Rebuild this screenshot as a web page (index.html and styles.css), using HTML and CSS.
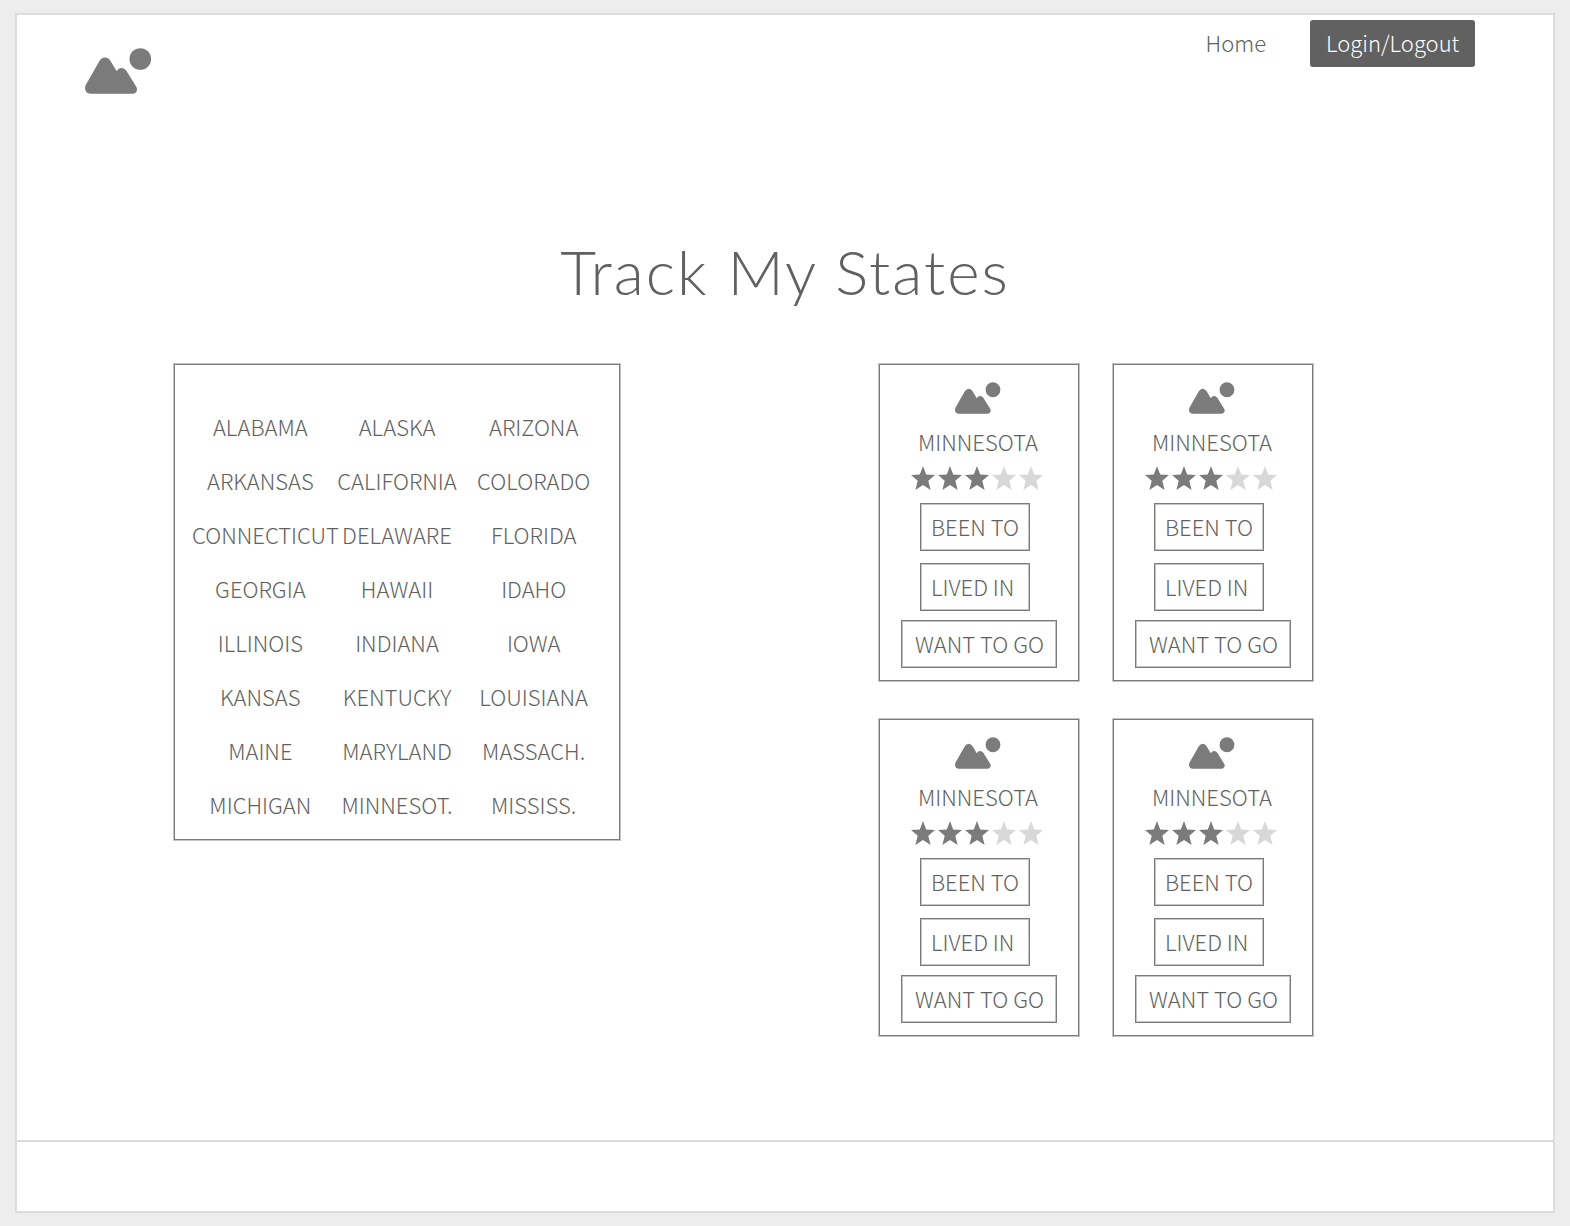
FILE: index.html
```html
<!DOCTYPE html>
<html lang="en">
<head>
<meta charset="utf-8">
<meta name="viewport" content="width=device-width, initial-scale=1">
<title>Track My States</title>
<link rel="stylesheet" href="styles.css">
</head>
<body>
<svg class="defs" aria-hidden="true">
  <symbol id="picture" viewBox="0 0 67 46">
    <circle cx="55.3" cy="11" r="10.8"/>
    <path d="M14.3 13.2Q16.5 9.5 20 9.5Q23.5 9.5 25.7 13.2L31.7 23.2Q33.5 20 36.7 20Q39.7 20 41.2 22.5L51 38.3Q52.2 40 52 41.7Q51.5 45.8 47.3 45.8H5.8Q0 45.4 0 40Q0 38.300 1 36.500Z"/>
  </symbol>
  <symbol id="star" viewBox="0 0 24 24">
    <path d="M12 0L15.200 8.600L24 9L17.300 14.800L19.600 24L12 19L4.400 24L6.700 14.800L0 9L8.800 8.600Z"/>
  </symbol>
</svg>
<div class="page">
  <header class="header">
    <a class="logo" href="#" aria-label="Track My States"><svg class="logo-icon"><use href="#picture"/></svg></a>
    <nav class="nav">
      <a class="nav-link" href="#">Home</a>
      <button class="login" type="button">Login/Logout</button>
    </nav>
  </header>
  <main class="main">
    <h1 class="title">Track My States</h1>
    <div class="content">
      <ul class="states">
        <li>ALABAMA</li><li>ALASKA</li><li>ARIZONA</li>
        <li>ARKANSAS</li><li>CALIFORNIA</li><li>COLORADO</li>
        <li>CONNECTICUT</li><li>DELAWARE</li><li>FLORIDA</li>
        <li>GEORGIA</li><li>HAWAII</li><li>IDAHO</li>
        <li>ILLINOIS</li><li>INDIANA</li><li>IOWA</li>
        <li>KANSAS</li><li>KENTUCKY</li><li>LOUISIANA</li>
        <li>MAINE</li><li>MARYLAND</li><li>MASSACH.</li>
        <li>MICHIGAN</li><li>MINNESOT.</li><li>MISSISS.</li>
      </ul>
      <div class="cards">
        <article class="card">
          <svg class="card-icon" aria-hidden="true"><use href="#picture"/></svg>
          <h2 class="card-name">MINNESOTA</h2>
          <div class="stars" role="img" aria-label="3 out of 5 stars"><svg class="star on"><use href="#star"/></svg><svg class="star on"><use href="#star"/></svg><svg class="star on"><use href="#star"/></svg><svg class="star"><use href="#star"/></svg><svg class="star"><use href="#star"/></svg></div>
          <div class="visits"><button class="choice" type="button">BEEN TO</button><button class="choice" type="button">LIVED IN</button></div>
          <button class="choice wish" type="button">WANT TO GO</button>
        </article>
        <article class="card">
          <svg class="card-icon" aria-hidden="true"><use href="#picture"/></svg>
          <h2 class="card-name">MINNESOTA</h2>
          <div class="stars" role="img" aria-label="3 out of 5 stars"><svg class="star on"><use href="#star"/></svg><svg class="star on"><use href="#star"/></svg><svg class="star on"><use href="#star"/></svg><svg class="star"><use href="#star"/></svg><svg class="star"><use href="#star"/></svg></div>
          <div class="visits"><button class="choice" type="button">BEEN TO</button><button class="choice" type="button">LIVED IN</button></div>
          <button class="choice wish" type="button">WANT TO GO</button>
        </article>
        <article class="card">
          <svg class="card-icon" aria-hidden="true"><use href="#picture"/></svg>
          <h2 class="card-name">MINNESOTA</h2>
          <div class="stars" role="img" aria-label="3 out of 5 stars"><svg class="star on"><use href="#star"/></svg><svg class="star on"><use href="#star"/></svg><svg class="star on"><use href="#star"/></svg><svg class="star"><use href="#star"/></svg><svg class="star"><use href="#star"/></svg></div>
          <div class="visits"><button class="choice" type="button">BEEN TO</button><button class="choice" type="button">LIVED IN</button></div>
          <button class="choice wish" type="button">WANT TO GO</button>
        </article>
        <article class="card">
          <svg class="card-icon" aria-hidden="true"><use href="#picture"/></svg>
          <h2 class="card-name">MINNESOTA</h2>
          <div class="stars" role="img" aria-label="3 out of 5 stars"><svg class="star on"><use href="#star"/></svg><svg class="star on"><use href="#star"/></svg><svg class="star on"><use href="#star"/></svg><svg class="star"><use href="#star"/></svg><svg class="star"><use href="#star"/></svg></div>
          <div class="visits"><button class="choice" type="button">BEEN TO</button><button class="choice" type="button">LIVED IN</button></div>
          <button class="choice wish" type="button">WANT TO GO</button>
        </article>
      </div>
    </div>
  </main>
  <footer class="footer"></footer>
</div>
</body>
</html>
```
FILE: styles.css
```css
* {
  box-sizing: border-box;
}

body {
  margin: 0;
  padding: 13px 15px;
  background: #ededed;
  color: #616161;
  font: 300 22px/32px "Noto Sans CJK SC", "Noto Sans", sans-serif;
}

button {
  font: inherit;
  color: inherit;
  cursor: pointer;
}

.defs {
  display: none;
}

.page {
  display: flex;
  flex-direction: column;
  min-height: calc(100vh - 26px);
  background: #fff;
  border: 2px solid #dcdcdc;
}

.header {
  display: flex;
  justify-content: space-between;
  align-items: flex-start;
  padding: 5px 78px 0 68px;
}

.logo {
  margin-top: 28px;
}

.logo-icon {
  display: block;
  width: 67px;
  height: 46px;
  fill: #7b7b7b;
}

.nav {
  display: flex;
  align-items: center;
  gap: 44px;
}

.nav-link {
  padding-bottom: 4px;
  color: inherit;
  text-decoration: none;
}

.login {
  height: 47px;
  width: 165px;
  padding: 0 16px 4px;
  border: 0;
  border-radius: 3px;
  background: #616161;
  color: #fff;
  text-align: left;
}

.main {
  flex: 1;
  padding: 140px 0 104px;
}

.title {
  margin: 0 0 56px;
  font: 300 62px/74px Lato, sans-serif;
  letter-spacing: 2px;
  text-align: center;
}

/* Both panels keep their size; the gutters share the rest of the width. */
.content {
  display: grid;
  grid-template-columns: 157fr 446px 259fr 434px 240fr;
  align-items: start;
}

.states {
  grid-column: 2;
  display: grid;
  grid-template-columns: repeat(3, minmax(0, 1fr));
  margin: 0;
  padding: 34px 17px 8px;
  list-style: none;
  line-height: 54px;
  text-align: center;
  border: 1px solid #7b7b7b;
  box-shadow: 0 0 0 1px #c4c4c4;
}

.cards {
  grid-column: 4;
  display: grid;
  grid-template-columns: 1fr 1fr;
  gap: 38px 34px;
}

.card {
  display: flex;
  flex-direction: column;
  align-items: center;
  padding: 17px 0 12px;
  border: 1px solid #7b7b7b;
  box-shadow: 0 0 0 1px #c4c4c4;
}

.card-icon {
  width: 46px;
  height: 32px;
  margin-right: 2px;
  fill: #7b7b7b;
}

.card-name {
  margin: 11px 2px 9px 0;
  font: inherit;
}

.stars {
  display: flex;
  gap: 3px;
  margin-right: 4px;
}

.star {
  width: 24px;
  height: 24px;
  fill: #d8d8d8;
}

.star.on {
  fill: #7b7b7b;
}

.visits {
  display: flex;
  flex-direction: column;
  gap: 12px;
  margin: 13px 8px 9px 0;
}

.choice {
  width: 110px;
  height: 48px;
  padding: 0 10px 2px;
  border: 1px solid #7b7b7b;
  box-shadow: inset 0 0 0 1px #c4c4c4;
  background: #fff;
  text-align: left;
  white-space: nowrap;
}

.wish {
  width: 156px;
  padding: 0 13px 2px;
}

.footer {
  height: 71px;
  border-top: 2px solid #dcdcdc;
}

@media (max-width: 1000px) {
  .content {
    grid-template-columns: 1fr;
    justify-items: center;
    gap: 38px;
  }

  .states,
  .cards {
    grid-column: 1;
  }
}
```
